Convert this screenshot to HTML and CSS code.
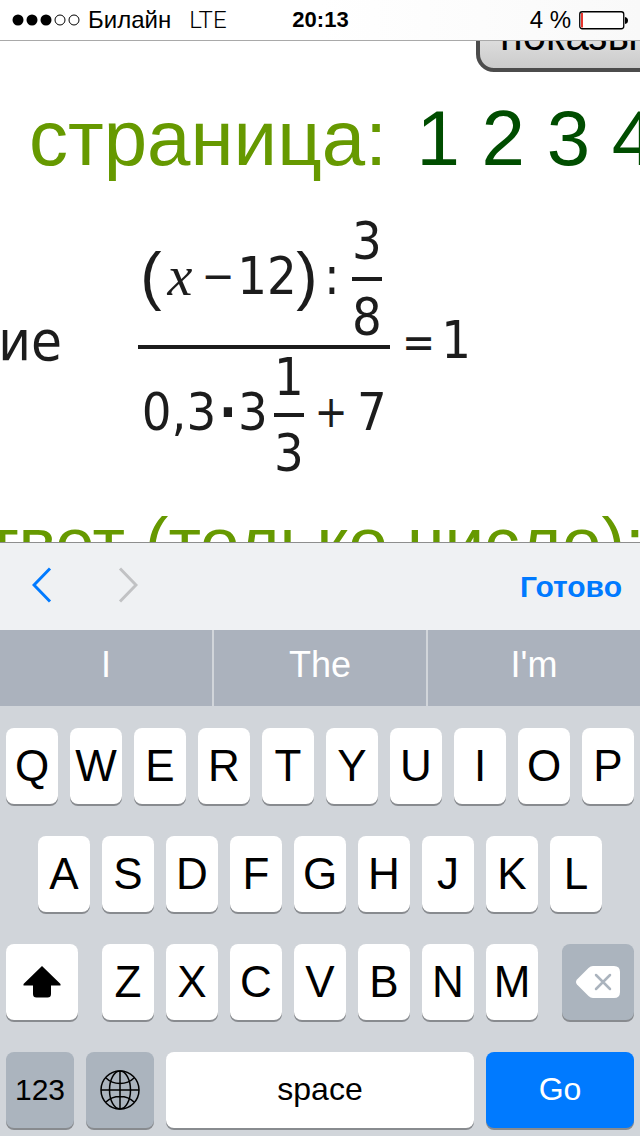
FILE: index.html
```html
<!DOCTYPE html>
<html lang="ru">
<head>
  <meta charset="UTF-8" />
  <meta name="viewport" content="width=device-width, initial-scale=1" />
  <title>Уравнение</title>
  <link rel="stylesheet" href="styles.css">
</head>
<body>

  <header class="status-bar">
    <div class="carrier">
      <svg class="signal" width="68" height="12" viewBox="0 0 68 12">
        <circle cx="6" cy="6" r="5.5" />
        <circle cx="20" cy="6" r="5.5" />
        <circle cx="34" cy="6" r="5.5" />
        <circle class="empty" cx="48" cy="6" r="5" />
        <circle class="empty" cx="62" cy="6" r="5" />
      </svg>
      <span>Билайн</span>
      <span class="network">LTE</span>
    </div>
    <div class="time">20:13</div>
    <div class="battery">
      <span>4 %</span>
      <svg width="50" height="20" viewBox="0 0 50 20">
        <rect x="0.75" y="1.75" width="44" height="17" rx="2.5" fill="#fff" stroke="#000" stroke-width="1.3" />
        <rect x="2" y="3" width="2" height="14.5" fill="#e8352e" />
        <path d="M46 7q3 .5 3 3.5t-3 3.5z" />
      </svg>
    </div>
  </header>

  <main class="page">
    <button type="button" class="show-btn">показывать</button>

    <nav class="pages">
      <span class="pages-label">страница:</span>
      <a href="#1">1</a>
      <a href="#2">2</a>
      <a href="#3">3</a>
      <a href="#4">4</a>
    </nav>

    <div class="equation">
      <span class="word">ие</span>
      <div class="big-fraction">
        <div class="numerator">
          <span class="paren">(</span>
          <span class="var">x</span>
          <span class="sign">−</span>
          <span>12</span>
          <span class="paren">)</span>
          <span>:</span>
          <div class="fraction"><span>3</span><span>8</span></div>
        </div>
        <div class="denominator">
          <span>0,3</span>
          <span class="dot">·</span>
          <span>3</span>
          <div class="fraction"><span>1</span><span>3</span></div>
          <span class="sign">+</span>
          <span>7</span>
        </div>
      </div>
      <span class="result"><span class="equals sign">=</span>1</span>
    </div>

    <div class="answer"><span>ответ (только число):</span></div>
  </main>

  <section class="keyboard">
    <div class="toolbar">
      <button type="button" class="nav-btn" aria-label="Назад">
        <svg width="20" height="36" viewBox="0 0 20 36"><path d="M18 1.5 2 18 18 34.5" /></svg>
      </button>
      <button type="button" class="nav-btn" aria-label="Вперёд" disabled>
        <svg width="20" height="36" viewBox="0 0 20 36"><path d="M2 1.5 18 18 2 34.5" /></svg>
      </button>
      <button type="button" class="done-btn">Готово</button>
    </div>

    <div class="suggestions">
      <button type="button">I</button>
      <button type="button">The</button>
      <button type="button">I'm</button>
    </div>

    <div class="keys">
      <div class="row">
        <button type="button">Q</button>
        <button type="button">W</button>
        <button type="button">E</button>
        <button type="button">R</button>
        <button type="button">T</button>
        <button type="button">Y</button>
        <button type="button">U</button>
        <button type="button">I</button>
        <button type="button">O</button>
        <button type="button">P</button>
      </div>
      <div class="row row-middle">
        <button type="button">A</button>
        <button type="button">S</button>
        <button type="button">D</button>
        <button type="button">F</button>
        <button type="button">G</button>
        <button type="button">H</button>
        <button type="button">J</button>
        <button type="button">K</button>
        <button type="button">L</button>
      </div>
      <div class="row row-shift">
        <button type="button" class="shift" aria-label="Shift">
          <svg width="38" height="32" viewBox="0 0 38 32"><path d="M19 0 37.5 18v1.500H28V28q0 3.500-3.500 3.500h-11Q10 31.500 10 28v-8.500H.5V18z" /></svg>
        </button>
        <div class="row letters">
          <button type="button">Z</button>
          <button type="button">X</button>
          <button type="button">C</button>
          <button type="button">V</button>
          <button type="button">B</button>
          <button type="button">N</button>
          <button type="button">M</button>
        </div>
        <button type="button" class="dark" aria-label="Delete">
          <svg width="44" height="32" viewBox="0 0 44 32">
            <path fill="#fff" d="M17 0h21q6 0 6 6v20q0 6-6 6H17q-2.500 0-4.500-2L1 18.500q-2-2.500 0-5L12.500 2q2-2 4.500-2z" />
            <path d="m20 9 14 14M34 9 20 23" fill="none" stroke="#abb4be" stroke-width="2.500" stroke-linecap="round" />
          </svg>
        </button>
      </div>
      <div class="row row-bottom">
        <button type="button" class="dark numbers">123</button>
        <button type="button" class="dark" aria-label="Language">
          <svg width="40" height="40" viewBox="0 0 40 40" fill="none" stroke="#000" stroke-width="1.500">
            <circle cx="20" cy="20" r="19" />
            <ellipse cx="20" cy="20" rx="10.500" ry="19" />
            <path d="M20 1v38M1 20h38M6 8q5.500 5.500 14 5.500T34 8M6 32q5.500-5.500 14-5.500T34 32" />
          </svg>
        </button>
        <button type="button">space</button>
        <button type="button" class="go">Go</button>
      </div>
    </div>
  </section>

</body>
</html>
```
FILE: styles.css
```css
* {
  box-sizing: border-box;
}

body {
  margin: 0;
  height: 100vh;
  display: flex;
  flex-direction: column;
  overflow: hidden;
  font-family: "Liberation Sans", Arial, sans-serif;
  background: #fff;
  color: #000;
}

button {
  margin: 0;
  padding: 0;
  border: none;
  background: none;
  font-family: inherit;
  color: inherit;
  cursor: pointer;
}

svg {
  display: block;
}

/* status bar */
.status-bar {
  display: grid;
  grid-template-columns: 1fr auto 1fr;
  align-items: center;
  height: 41px;
  padding: 0 11px 0 12px;
  border-bottom: 1px solid #a9a9a9;
  background: linear-gradient(to right, #fff 50%, #f9f9f9);
  font-size: 24px;
  flex: none;
}

.carrier, .battery {
  display: flex;
  align-items: center;
  gap: 8px;
}

.signal .empty {
  fill: none;
  stroke: #000;
}

.network {
  margin-left: 10px;
  font-family: Roboto, "Liberation Sans", sans-serif;
  font-weight: 300;
}

.time {
  font-size: 22px;
  font-weight: bold;
}

.battery {
  justify-content: flex-end;
}

/* web page */
.page {
  flex: 1;
  min-height: 0;
  overflow: hidden;
  white-space: nowrap;
}

.show-btn {
  display: block;
  height: 72px;
  margin: -41px 0 0 476px;
  padding: 0 20px;
  border: 4px solid #4c4c4c;
  border-radius: 18px;
  background: linear-gradient(#f4f4f4, #cbcbcb);
  font-size: 42px;
}

.pages {
  margin: 22px 0 0 29px;
  font-size: 78px;
  line-height: 88px;
  color: #690;
}

.pages-label {
  margin-right: 8px;
}

.pages a {
  color: #004d00;
  text-decoration: none;
}

.equation {
  display: flex;
  align-items: center;
  margin-top: 31px;
  font-family: "DejaVu Sans Condensed", "DejaVu Sans", sans-serif;
  font-size: 52px;
  line-height: 56px;
  color: #1c1c1c;
}

.word {
  display: flex;
  justify-content: flex-end;
  width: 62px;
  margin-right: 76px;
  padding-bottom: 12px;
  font-size: 56px;
}

.big-fraction {
  width: 252px;
}

.numerator, .denominator {
  display: grid;
  align-items: center;
  justify-items: center;
}

.numerator > span, .denominator > span {
  padding-bottom: 6px;
}

.numerator {
  grid-template-columns: 26px 32px 44px 54px 26px 24px 46px;
}

.denominator {
  grid-template-columns: 82px 16px 34px 38px 46px 36px;
  border-top: 4px solid #1c1c1c;
}

.fraction {
  display: flex;
  flex-direction: column;
  align-items: center;
}

.fraction span:first-child {
  padding-bottom: 8px;
}

.fraction span:last-child {
  padding-top: 8px;
  border-top: 4px solid #1c1c1c;
}

.paren {
  font-family: "Liberation Sans", sans-serif;
  font-size: 64px;
}

.var {
  font-family: "Liberation Serif", serif;
  font-style: italic;
  font-size: 56px;
}

.sign {
  font-size: 44px;
}

.dot {
  font-weight: bold;
}

.result {
  padding-bottom: 12px;
}

.equals {
  margin: 0 6px 0 12px;
}

.answer {
  margin-top: 22px;
  font-size: 71px;
  line-height: 80px;
  color: #690;
}

.answer span {
  margin-left: -52px;
}

/* keyboard */
.keyboard {
  flex: none;
  background: #d1d5da;
}

.toolbar {
  display: flex;
  align-items: center;
  gap: 66px;
  height: 88px;
  padding: 0 18px 4px 32px;
  border-top: 1px solid #8e8e8e;
  background: #eff1f3;
}

.nav-btn path {
  fill: none;
  stroke: #007aff;
  stroke-width: 3;
}

.nav-btn:disabled path {
  stroke: #c1c2c4;
}

.done-btn {
  margin-left: auto;
  padding-top: 4px;
  font-size: 30px;
  font-weight: bold;
  color: #007aff;
}

.suggestions {
  display: grid;
  grid-template-columns: repeat(3, 1fr);
  gap: 2px;
}

.suggestions button {
  height: 76px;
  padding-bottom: 6px;
  background: #abb2bd;
  font-size: 36px;
  color: #fff;
}

.keys {
  display: flex;
  flex-direction: column;
  gap: 32px;
  padding: 22px 6px 8px;
}

.row {
  display: flex;
  gap: 12px;
}

.row button {
  display: flex;
  align-items: center;
  justify-content: center;
  flex: 1;
  min-width: 0;
  height: 76px;
  border-radius: 8px;
  background: #fff;
  box-shadow: 0 2px 0 #888b8f;
  font-size: 44px;
}

.row-middle {
  padding: 0 32px;
}

.row-shift {
  display: grid;
  grid-template-columns: 72px 1fr 72px;
  gap: 24px;
}

.row-bottom {
  display: grid;
  grid-template-columns: 68px 68px 1fr 148px;
}

.row-bottom button {
  padding-bottom: 2px;
  font-size: 32px;
}

.row-bottom .dark {
  padding: 0;
}

.row-bottom .numbers {
  font-size: 30px;
}

.row .dark {
  background: #abb4be;
}

.row .go {
  background: #007aff;
  color: #fff;
}
```
